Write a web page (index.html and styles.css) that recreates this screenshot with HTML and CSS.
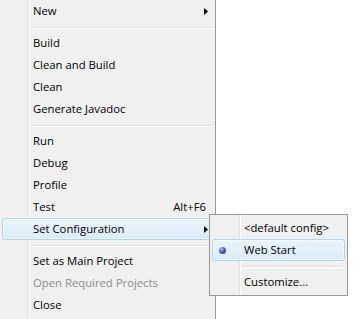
FILE: index.html
```html
<!DOCTYPE html>
<html lang="en">
<head>
    <meta charset="UTF-8">
    <title>Project menu</title>
    <link rel="stylesheet" href="styles.css">
</head>
<body>
    <div class="menu">
        <div class="item">
            <span class="label">New</span>
            <svg class="arrow" width="4" height="7" viewBox="0 0 4 7"><path d="M0 0L4 3.5L0 7z"/></svg>
        </div>
        <div class="separator"></div>
        <div class="item"><span class="label">Build</span></div>
        <div class="item"><span class="label">Clean and Build</span></div>
        <div class="item"><span class="label">Clean</span></div>
        <div class="item"><span class="label">Generate Javadoc</span></div>
        <div class="separator"></div>
        <div class="item"><span class="label">Run</span></div>
        <div class="item"><span class="label">Debug</span></div>
        <div class="item"><span class="label">Profile</span></div>
        <div class="item">
            <span class="label">Test</span>
            <span class="shortcut">Alt+F6</span>
        </div>
        <div class="item active">
            <span class="label">Set Configuration</span>
            <svg class="arrow" width="4" height="7" viewBox="0 0 4 7"><path d="M0 0L4 3.5L0 7z"/></svg>
        </div>
        <div class="separator"></div>
        <div class="item"><span class="label">Set as Main Project</span></div>
        <div class="item disabled"><span class="label">Open Required Projects</span></div>
        <div class="item"><span class="label">Close</span></div>
    </div>

    <!-- submenu of Set Configuration -->
    <div class="submenu">
        <div class="item"><span class="label">&lt;default config&gt;</span></div>
        <div class="item active">
            <span class="radio"></span>
            <span class="label">Web Start</span>
        </div>
        <div class="separator"></div>
        <div class="item"><span class="label">Customize...</span></div>
    </div>
</body>
</html>
```

FILE: styles.css
```css
body {
    margin: 0;
    padding: 0;
    background: #fff;
    font-family: "Open Sans", "Noto Sans", Arial, sans-serif;
    font-size: 11.3px;
    color: #000;
    overflow: hidden;
}

.menu {
    width: 215px;
    height: 330px;
    border-right: 1px solid #979797;
    background: linear-gradient(to right, #f0f0f0 28px, #e2e3e3 28px 29px, #fff 29px 30px, #f0f0f0 30px);
}

.item {
    position: relative;
    display: flex;
    align-items: center;
    height: 22px;
    box-sizing: border-box;
    margin: 0 2px;
    padding: 0 6px 1px 30px;
    border: 1px solid transparent;
    border-radius: 3px;
    white-space: nowrap;
}

.item .label {
    flex: 1;
}

.item.active {
    border-color: #a9d9f0;
    background: linear-gradient(#eaf4fc, #dbebf7);
    box-shadow: inset 0 0 0 1px rgba(255, 255, 255, 0.5);
}

.item.disabled {
    color: #8d8d8d;
}

.arrow {
    display: block;
    margin: 1px -2px 0 0;
    fill: #000;
}

.separator {
    height: 10px;
    margin: 0 2px 0 30px;
    background: linear-gradient(#f0f0f0 5px, #e2e3e3 5px 6px, #fff 6px 7px, #f0f0f0 7px);
}

.submenu {
    position: absolute;
    left: 209px;
    top: 214px;
    width: 137px;
    padding: 2px 0;
    border: 1px solid #979797;
    background: linear-gradient(to right, #f0f0f0 29px, #e2e3e3 29px 30px, #fff 30px 31px, #f0f0f0 31px);
}

.submenu .item {
    padding-left: 31px;
}

.submenu .separator {
    margin-left: 31px;
}

.radio {
    position: absolute;
    left: 6px;
    top: 7px;
    width: 7px;
    height: 7px;
    border-radius: 50%;
    background: radial-gradient(circle at 35% 30%, #b9bdf0 0, #5a5fc0 45%, #25297a 100%);
}
```
